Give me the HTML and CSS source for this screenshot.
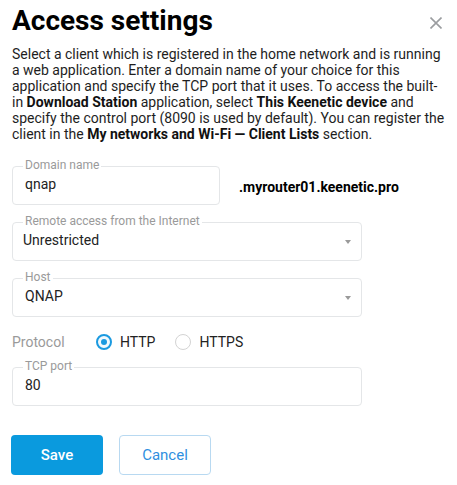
FILE: index.html
```html
<!DOCTYPE html>
<html lang="en">
<head>
<meta charset="utf-8">
<title>Access settings</title>
<link rel="stylesheet" href="styles.css">
</head>
<body>
<div class="dialog">
  <div class="header">
    <h1 class="title">Access settings</h1>
    <button class="close" aria-label="Close">
      <svg width="12" height="12" viewBox="0 0 12 12"><path d="M0.5 0.5L11.5 11.5M11.5 0.5L0.5 11.5" stroke="#9b9da0" stroke-width="1.6" fill="none"/></svg>
    </button>
  </div>
  <p class="desc">Select a client which is registered in the home network and is running a web application. Enter a domain name of your choice for this application and specify the TCP port that it uses. To access the built-in <b>Download Station</b> application, select <b>This Keenetic device</b> and specify the control port (8090 is used by default). You can register the client in the <b>My networks and Wi-Fi — Client Lists</b> section.</p>

  <div class="form">
    <div class="row">
      <div class="field field-short">
        <span class="legend">Domain name</span>
        <span class="value">qnap</span>
      </div>
      <span class="suffix">.myrouter01.keenetic.pro</span>
    </div>
    <div class="field field-select">
      <span class="legend">Remote access from the Internet</span>
      <span class="value value-sel">Unrestricted</span>
      <span class="caret"></span>
    </div>
    <div class="field field-select">
      <span class="legend">Host</span>
      <span class="value">QNAP</span>
      <span class="caret"></span>
    </div>
    <div class="protocol">
      <span class="plabel">Protocol</span>
      <label class="radio"><span class="dot on"></span>HTTP</label>
      <label class="radio"><span class="dot"></span>HTTPS</label>
    </div>
    <div class="field field-wide">
      <span class="legend">TCP port</span>
      <span class="value">80</span>
    </div>
  </div>

  <div class="buttons">
    <button class="btn btn-primary">Save</button>
    <button class="btn btn-secondary">Cancel</button>
  </div>
</div>
</body>
</html>
```
FILE: styles.css
```css
html, body {
  margin: 0;
  padding: 0;
  background: #fff;
}
body {
  font-family: Roboto, "Liberation Sans", sans-serif;
  color: #222;
}
.dialog {
  padding: 4px 12px 0 12px;
}
.header {
  display: flex;
  justify-content: space-between;
  align-items: flex-start;
}
.title {
  margin: 0;
  font-size: 28px;
  line-height: 34px;
  font-weight: 700;
  color: #000;
}
.close {
  border: 0;
  background: none;
  padding: 0;
  margin: 13px 3px 0 0;
  width: 12px;
  height: 12px;
  display: block;
}
.close svg { display: block; }
.desc {
  margin: 8px 0 0 0;
  font-size: 14px;
  line-height: 16px;
  color: #1e1e1e;
}
.desc b { font-weight: 700; color: #111; }
.form {
  margin-top: 24px;
  display: flex;
  flex-direction: column;
  gap: 17px;
}
.row {
  display: flex;
  align-items: center;
  gap: 19px;
}
.field {
  position: relative;
  box-sizing: border-box;
  height: 39px;
  border: 1px solid #e4e6e8;
  border-radius: 4px;
  display: flex;
  align-items: flex-start;
  padding: 8px 12px 0 12px;
}
.field-short { width: 208px; }
.field-select, .field-wide { width: 350px; }
.legend {
  position: absolute;
  left: 10px;
  top: -9px;
  padding: 0 2px;
  background: #fff;
  font-size: 12px;
  line-height: 15px;
  color: #9a9a9a;
  white-space: nowrap;
}
.value {
  font-size: 14px;
  line-height: 18px;
  color: #222;
}
.value-sel { margin-left: -2px; }
.caret {
  position: absolute;
  right: 10px;
  top: 17px;
  width: 0;
  height: 0;
  border-left: 3.5px solid transparent;
  border-right: 3.5px solid transparent;
  border-top: 4px solid #9a9a9a;
}
.suffix {
  font-size: 14px;
  font-weight: 700;
  color: #000;
  margin-top: 2px;
}
.protocol {
  display: flex;
  align-items: center;
  height: 16px;
  font-size: 14px;
  line-height: 16px;
}
.plabel {
  color: #9a9a9a;
  width: 84px;
}
.radio {
  display: flex;
  align-items: center;
  gap: 8px;
  margin-right: 20px;
  color: #222;
}
.dot {
  box-sizing: border-box;
  width: 16px;
  height: 16px;
  border-radius: 50%;
  border: 1px solid #d3d3d3;
  background: #fff;
  position: relative;
}
.dot.on {
  border: 2px solid #1b9ae0;
  background: #f2f9fd;
}
.dot.on::after {
  content: "";
  position: absolute;
  left: 3px;
  top: 3px;
  width: 6px;
  height: 6px;
  border-radius: 50%;
  background: #1b9ae0;
}
.buttons {
  display: flex;
  gap: 16px;
  margin-top: 29px;
  margin-left: -1px;
}
.btn {
  box-sizing: border-box;
  width: 92px;
  height: 40px;
  border-radius: 4px;
  font-family: Roboto, "Liberation Sans", sans-serif;
  font-size: 15px;
  cursor: pointer;
}
.btn-primary {
  background: #0a9ade;
  border: 0;
  color: #fff;
  font-weight: 500;
}
.btn-secondary {
  background: #fff;
  border: 1px solid #b8d9f1;
  color: #2f8fe0;
  font-weight: 400;
}
```
